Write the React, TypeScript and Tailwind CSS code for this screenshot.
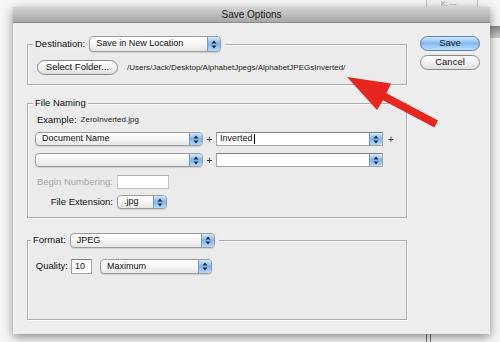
import type { ReactNode } from "react";

const FONT = { fontFamily: '"Liberation Sans", Arial, sans-serif' };

function Stepper() {
  return (
    <span className="flex h-full w-[13px] shrink-0 items-center justify-center rounded-r-[3px] border-l border-[#6f9bd0] bg-gradient-to-b from-[#d6eafc] via-[#7fb3ea] to-[#b8daf9]">
      <svg width="6" height="9" viewBox="0 0 6 9">
        <path d="M3 0.5 L5.5 3.5 L0.5 3.5 Z" fill="#1d2b40" />
        <path d="M3 8.5 L5.5 5.5 L0.5 5.5 Z" fill="#1d2b40" />
      </svg>
    </span>
  );
}

function PopUp({ label, className }: { label: string; className: string }) {
  return (
    <div
      className={`flex items-center overflow-hidden rounded-[4px] border border-[#9c9c9c] bg-gradient-to-b from-white via-[#f6f6f6] to-[#e6e6e6] shadow-[0_1px_1px_rgba(0,0,0,0.12)] ${className}`}
    >
      <span className="flex-1 truncate pl-[6px] text-[9px] text-[#111]">{label}</span>
      <Stepper />
    </div>
  );
}

function Combo({ value, className }: { value: string; className: string }) {
  return (
    <div className={`flex items-center border border-[#a3a3a3] border-t-[#7e7e7e] bg-white ${className}`}>
      <span className="flex flex-1 items-center pl-[3px] text-[9px] text-[#111]">
        {value}
        {value && <span className="ml-[1px] h-[10px] w-px bg-black" />}
      </span>
      <Stepper />
    </div>
  );
}

function Field({ value, className }: { value?: string; className: string }) {
  return (
    <div
      className={`flex items-center border border-[#a3a3a3] border-t-[#7e7e7e] bg-white pl-[3px] text-[9px] text-[#111] ${className}`}
    >
      {value}
    </div>
  );
}

function Group({ legend, className, children }: { legend: ReactNode; className: string; children: ReactNode }) {
  return (
    <div
      className={`flex w-[380px] flex-col border border-[#acacac] bg-[#ebebeb] shadow-[inset_1px_1px_0_#f8f8f8,1px_1px_0_#f8f8f8] ${className}`}
    >
      {legend}
      {children}
    </div>
  );
}

function Plus({ className }: { className: string }) {
  return <span className={`text-center text-[10px] text-[#333] ${className}`}>+</span>;
}

export default function App() {
  return (
    <div className="relative h-[342px] w-[500px] overflow-hidden bg-[#f7f7f7]" style={FONT}>
      {/* window behind, top right */}
      <div className="absolute left-[426px] top-[-2px] flex h-[12px] w-[52px] items-center border border-[#c4c4c4] bg-[#f2f2f2] pl-[14px] text-[7px] text-[#9a9a9a]">
        K: ---
      </div>
      <div className="absolute left-[490px] top-[26px] h-[12px] w-[10px] bg-gradient-to-b from-[#8a8a8a] to-[#d0d0d0]" />
      <div className="absolute left-[426px] top-[330px] h-[12px] w-[5px] border-x border-[#777]" />

      {/* dialog */}
      <div className="absolute left-[13px] top-[7px] flex h-[327px] w-[477px] flex-col bg-[#eeeeee] shadow-[0_3px_10px_rgba(0,0,0,0.45)]">
        <div className="flex h-[16px] shrink-0 items-center justify-center border-b border-[#8c8c8c] bg-gradient-to-b from-[#d4d4d4] to-[#a7a7a7] text-[10px] text-[#1a1a1a]">
          Save Options
        </div>

        <div className="flex flex-1">
          <div className="flex w-[394px] flex-col pl-[14px]">
            {/* Destination */}
            <Group
              className="mt-[21px] pb-[9px]"
              legend={
                <div className="-mt-[9px] ml-[5px] flex h-[16px] items-center self-start bg-[#ececec] px-[2px]">
                  <span className="text-[9.5px] text-[#111]">Destination:</span>
                  <PopUp label="Save in New Location" className="ml-[4px] h-[16px] w-[132px]" />
                  <span className="w-[2px]" />
                </div>
              }
            >
              <div className="mt-[8px] flex items-center pl-[9px]">
                <div className="flex h-[15px] w-[81px] items-center justify-center rounded-full border border-[#8a8a8a] bg-gradient-to-b from-white via-[#f2f2f2] to-[#dedede] text-[9.5px] text-[#111]">
                  Select Folder...
                </div>
                <span className="ml-[9px] text-[8px] text-[#222]">
                  /Users/Jack/Desktop/AlphabetJpegs/AlphabetJPEGsInverted/
                </span>
              </div>
            </Group>

            {/* File Naming */}
            <Group
              className="mt-[18px] pb-[8px]"
              legend={
                <div className="-mt-[7px] ml-[5px] flex h-[12px] items-center self-start bg-[#ececec] px-[2px] text-[9.5px] text-[#111]">
                  File Naming
                </div>
              }
            >
              <div className="mt-[5px] flex h-[12px] items-center pl-[9px] text-[9.5px] text-[#111]">
                Example:
                <span className="ml-[4px] text-[8px] text-[#222]">ZeroInverted.jpg</span>
              </div>
              <div className="mt-[6px] flex h-[14px] items-center pl-[7px]">
                <PopUp label="Document Name" className="h-[14px] w-[168px]" />
                <Plus className="w-[13px]" />
                <Combo value="Inverted" className="h-[14px] w-[167px]" />
                <Plus className="w-[16px]" />
              </div>
              <div className="mt-[7px] flex h-[14px] items-center pl-[7px]">
                <PopUp label="" className="h-[14px] w-[168px]" />
                <Plus className="w-[13px]" />
                <Combo value="" className="h-[14px] w-[167px]" />
              </div>
              <div className="mt-[8px] flex h-[14px] items-center pl-[7px]">
                <span className="w-[82px] pr-[4px] text-right text-[9.5px] text-[#a6a6a6]">Begin Numbering:</span>
                <Field className="h-[14px] w-[52px] border-[#c4c4c4] border-t-[#b0b0b0]" />
              </div>
              <div className="mt-[6px] flex h-[14px] items-center pl-[7px]">
                <span className="w-[82px] pr-[4px] text-right text-[9.5px] text-[#111]">File Extension:</span>
                <PopUp label=".jpg" className="h-[14px] w-[50px]" />
              </div>
            </Group>

            {/* Format */}
            <Group
              className="mt-[22px] pb-[45px]"
              legend={
                <div className="-mt-[8px] ml-[3px] flex h-[15px] items-center self-start bg-[#ececec] px-[2px]">
                  <span className="text-[9.5px] text-[#111]">Format:</span>
                  <PopUp label="JPEG" className="ml-[4px] h-[15px] w-[145px]" />
                  <span className="w-[2px]" />
                </div>
              }
            >
              <div className="mt-[11px] flex h-[15px] items-center pl-[7px]">
                <span className="w-[36px] pr-[3px] text-right text-[9.5px] text-[#111]">Quality:</span>
                <Field value="10" className="h-[15px] w-[21px]" />
                <PopUp label="Maximum" className="ml-[8px] h-[15px] w-[112px]" />
              </div>
            </Group>
          </div>

          {/* buttons */}
          <div className="ml-[13px] flex w-[60px] flex-col pt-[13px]">
            <div className="flex h-[15px] items-center justify-center rounded-full border border-[#5a84b6] bg-gradient-to-b from-[#d2e8fc] via-[#84b9ef] to-[#bfe0fc] text-[9.5px] text-[#0d1a2b]">
              Save
            </div>
            <div className="mt-[4px] flex h-[15px] items-center justify-center rounded-full border border-[#8a8a8a] bg-gradient-to-b from-white via-[#f2f2f2] to-[#dedede] text-[9.5px] text-[#111]">
              Cancel
            </div>
          </div>
        </div>
      </div>

      {/* red annotation arrow */}
      <svg className="absolute left-0 top-0" width="500" height="342" viewBox="0 0 500 342">
        <polygon
          points="347,77 391,83.6 386.5,93.2 438,120.5 434.5,127.5 383,100.2 377,110"
          fill="#e8261f"
        />
      </svg>
    </div>
  );
}
